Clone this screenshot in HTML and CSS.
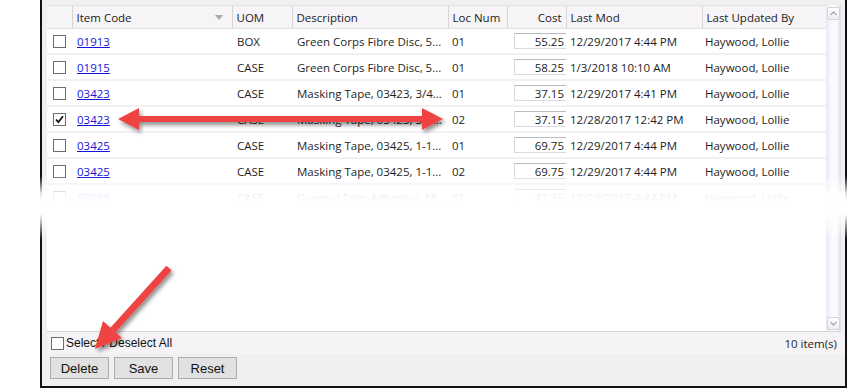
FILE: index.html
```html
<!DOCTYPE html>
<html lang="en">
<head>
  <title>Item Costs</title>
  <meta charset="UTF-8">
  <link rel="stylesheet" href="styles.css">
</head>
<body>
  <div class="window">
    <div class="grid">
      <div class="grid-main">
        <table class="items">
          <colgroup>
            <col class="c-check"><col class="c-code"><col class="c-uom"><col class="c-desc">
            <col class="c-loc"><col class="c-cost"><col class="c-mod"><col class="c-by">
          </colgroup>
          <thead>
            <tr>
              <th></th>
              <th><div class="sortable">Item Code <span class="sort"></span></div></th>
              <th>UOM</th>
              <th>Description</th>
              <th>Loc Num</th>
              <th class="num">Cost</th>
              <th>Last Mod</th>
              <th>Last Updated By</th>
            </tr>
          </thead>
          <tbody>
            <tr>
              <td><span class="cb"></span></td>
              <td><a href="#">01913</a></td>
              <td>BOX</td>
              <td>Green Corps Fibre Disc, 5...</td>
              <td>01</td>
              <td><span class="cost">55.25</span></td>
              <td>12/29/2017 4:44 PM</td>
              <td>Haywood, Lollie</td>
            </tr>
            <tr>
              <td><span class="cb"></span></td>
              <td><a href="#">01915</a></td>
              <td>CASE</td>
              <td>Green Corps Fibre Disc, 5...</td>
              <td>01</td>
              <td><span class="cost">58.25</span></td>
              <td>1/3/2018 10:10 AM</td>
              <td>Haywood, Lollie</td>
            </tr>
            <tr>
              <td><span class="cb"></span></td>
              <td><a href="#">03423</a></td>
              <td>CASE</td>
              <td>Masking Tape, 03423, 3/4...</td>
              <td>01</td>
              <td><span class="cost">37.15</span></td>
              <td>12/29/2017 4:41 PM</td>
              <td>Haywood, Lollie</td>
            </tr>
            <tr>
              <td><span class="cb checked"><svg viewBox="0 0 11 11" width="11" height="11"><path d="M2 5.5 L4.3 8.2 L9 2.3" fill="none" stroke="#111" stroke-width="1.8"/></svg></span></td>
              <td><a href="#">03423</a></td>
              <td>CASE</td>
              <td>Masking Tape, 03423, 3/4...</td>
              <td>02</td>
              <td><span class="cost">37.15</span></td>
              <td>12/28/2017 12:42 PM</td>
              <td>Haywood, Lollie</td>
            </tr>
            <tr>
              <td><span class="cb"></span></td>
              <td><a href="#">03425</a></td>
              <td>CASE</td>
              <td>Masking Tape, 03425, 1-1...</td>
              <td>01</td>
              <td><span class="cost">69.75</span></td>
              <td>12/29/2017 4:44 PM</td>
              <td>Haywood, Lollie</td>
            </tr>
            <tr>
              <td><span class="cb"></span></td>
              <td><a href="#">03425</a></td>
              <td>CASE</td>
              <td>Masking Tape, 03425, 1-1...</td>
              <td>02</td>
              <td><span class="cost">69.75</span></td>
              <td>12/29/2017 4:44 PM</td>
              <td>Haywood, Lollie</td>
            </tr>
            <tr>
              <td><span class="cb"></span></td>
              <td><a href="#">03988</a></td>
              <td>CASE</td>
              <td>General Trim Adhesive, 18...</td>
              <td>01</td>
              <td><span class="cost">42.35</span></td>
              <td>12/29/2017 4:44 PM</td>
              <td>Haywood, Lollie</td>
            </tr>
          </tbody>
        </table>
      </div>
      <div class="scrollbar">
        <span class="sb-btn">
          <svg viewBox="0 0 13 13" width="13" height="13"><path d="M3.5 8 L6.5 5 L9.5 8" fill="none" stroke="#a9abb3" stroke-width="1.4"/></svg>
        </span>
        <span class="sb-btn">
          <svg viewBox="0 0 13 13" width="13" height="13"><path d="M3.5 5 L6.5 8 L9.5 5" fill="none" stroke="#a9abb3" stroke-width="1.4"/></svg>
        </span>
      </div>
    </div>
    <div class="status">
      <label class="select-all"><span class="cb"></span>Select / Deselect All</label>
      <span class="count">10 item(s)</span>
    </div>
    <div class="buttons">
      <button>Delete</button>
      <button>Save</button>
      <button>Reset</button>
    </div>
  </div>

  <!-- torn edge of the screenshot -->
  <div class="tear"></div>

  <!-- red annotation arrows -->
  <svg class="marks" width="848" height="388" viewBox="0 0 848 388">
    <defs>
      <filter id="shadow" x="-10%" y="-30%" width="130%" height="180%">
        <feDropShadow dx="2" dy="3" stdDeviation="2" flood-color="#000" flood-opacity="0.45"/>
      </filter>
    </defs>
    <g filter="url(#shadow)" fill="#ef4343">
      <polygon points="118,119 139,108 139,116 422,116 422,108 443,119 422,130 422,122 139,122 139,130"/>
      <line x1="169" y1="268" x2="113" y2="330" stroke="#ef4343" stroke-width="7"/>
      <polygon points="95,349 103,321 122,338"/>
    </g>
  </svg>
</body>
</html>
```

FILE: styles.css
```css
/* page */
body {
  margin: 0;
  width: 848px;
  height: 388px;
  background: #fff;
  font-family: "Open Sans", "Noto Sans", sans-serif;
  font-size: 11.5px;
  color: #1e1e1e;
  position: relative;
  overflow: hidden;
}

/* window frame */
.window {
  margin-left: 40px;
  width: 807px;
  height: 388px;
  box-sizing: border-box;
  border: 2px solid #111;
  border-top: none;
  background: #f0f0f0;
  padding: 5px 4px 0 5px;
  display: flex;
  flex-direction: column;
}

/* grid */
.grid {
  display: flex;
  width: 794px;
  height: 327px;
  box-sizing: border-box;
  border-bottom: 1px solid #d6d6d6;
  background: #fff;
}

.grid-main {
  width: 779px;
  overflow: hidden;
}

.items {
  width: 779px;
  table-layout: fixed;
  border-collapse: collapse;
}

.c-check { width: 25px; }
.c-code { width: 160px; }
.c-uom { width: 60px; }
.c-desc { width: 156px; }
.c-loc { width: 59px; }
.c-cost { width: 59px; }
.c-mod { width: 136px; }
.c-by { width: 124px; }

.items th {
  height: 22px;
  padding: 0 4px;
  background: #f6f4f6;
  border-top: 1px solid #e4e1e4;
  border-bottom: 1px solid #e4e1e4;
  border-left: 1px solid #d8d4d8;
  font-weight: normal;
  text-align: left;
  white-space: nowrap;
  overflow: hidden;
  color: #222;
}

.items th:first-child {
  border-left: none;
}

.items th.num {
  text-align: right;
  padding-right: 4px;
}

.sortable {
  display: flex;
  align-items: center;
  justify-content: space-between;
  padding-right: 5px;
}

.sort {
  width: 0;
  height: 0;
  border-left: 4px solid transparent;
  border-right: 4px solid transparent;
  border-top: 5px solid #a8a8a8;
}

.items td {
  height: 24px;
  padding: 0 4px;
  border-bottom: 2px solid #f3f0f3;
  white-space: nowrap;
  overflow: hidden;
}

.items td:nth-child(2) { padding-left: 5px; }
.items td:nth-child(3) { padding-left: 5px; }
.items td:nth-child(4) { padding-left: 5px; }
.items td:nth-child(8) { padding-left: 3px; }

.items a {
  color: #1414d8;
  text-decoration: underline;
}

.items td:nth-child(6) {
  padding: 0;
}

/* cost editor box */
.cost {
  display: block;
  margin-left: 7px;
  height: 16px;
  line-height: 15px;
  box-sizing: border-box;
  border: 1px solid #d9dbe0;
  border-top-color: #b9bbc1;
  border-right: none;
  padding-right: 2px;
  text-align: right;
  background: #fff;
}

/* checkbox */
.cb {
  display: block;
  width: 13px;
  height: 13px;
  box-sizing: border-box;
  border: 1px solid #6e6e6e;
  background: #fff;
  margin-left: 2px;
}

.cb svg {
  display: block;
}

/* scrollbar */
.scrollbar {
  width: 15px;
  display: flex;
  flex-direction: column;
  justify-content: space-between;
  align-items: center;
  padding: 2px 0 1px;
  box-sizing: border-box;
  background: linear-gradient(to right, #e9e8f4, #fbfbfe 40%, #fbfbfe 70%, #dddce9);
}

.sb-btn {
  display: block;
  width: 13px;
  height: 13px;
  box-sizing: border-box;
  border: 1px solid #d3d3dc;
  border-radius: 2px;
  background: linear-gradient(#ffffff, #eceef3);
}

.sb-btn svg {
  display: block;
  margin: -1px;
}

/* status bar */
.status {
  height: 22px;
  margin-right: -4px;
  padding: 0 8px 0 4px;
  display: flex;
  align-items: center;
  justify-content: space-between;
  background: #f5f3f6;
}

.select-all {
  display: flex;
  align-items: center;
  font-family: "Liberation Sans", Arial, sans-serif;
  font-size: 12px;
  color: #111;
}

.select-all .cb {
  margin: 0 2px 0 0;
}

.count {
  color: #1e1e1e;
}

/* buttons */
.buttons {
  display: flex;
  gap: 5px;
  padding: 3px 0 0 3px;
}

.buttons button {
  width: 59px;
  height: 22px;
  margin: 0;
  padding: 0;
  border: 1px solid #adadad;
  background: #e1e1e1;
  font-family: "Liberation Sans", Arial, sans-serif;
  font-size: 13px;
  color: #111;
}

/* torn edge */
.tear {
  position: absolute;
  left: 0;
  right: 0;
  top: 176px;
  height: 64px;
  background: linear-gradient(to bottom, rgba(255,255,255,0) 0, rgba(255,255,255,0.9) 18px, #fff 26px, #fff 38px, rgba(255,255,255,0) 64px);
}

/* annotations */
.marks {
  position: absolute;
  left: 0;
  top: 0;
  pointer-events: none;
}
```
